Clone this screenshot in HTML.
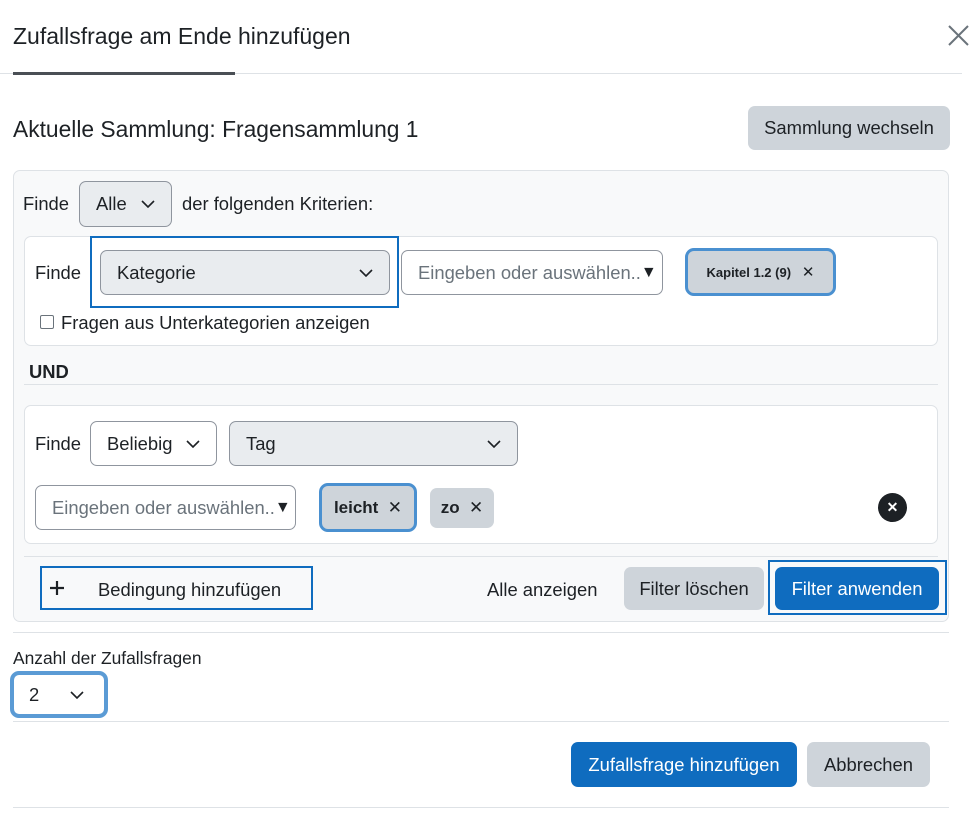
<!DOCTYPE html>
<html><head><meta charset="utf-8"><style>
*{box-sizing:border-box;margin:0;padding:0}
body{width:969px;height:835px;background:#fff;font-family:"Liberation Sans",sans-serif;color:#1d2125;position:relative;overflow:hidden;font-size:18.4px}
.a{position:absolute}
.t{position:absolute;white-space:nowrap;line-height:1}
.sel{position:absolute;border:1px solid #8f959e;border-radius:7px;display:flex;align-items:center;padding-left:16px}
.sel svg{position:absolute;right:16px;top:50%;margin-top:-4px}
.btn{position:absolute;border-radius:7px;display:flex;align-items:center;justify-content:center;white-space:nowrap}
.line{position:absolute;height:1px;background:#dee2e6}
</style></head><body>
<div class="t" style="left:13px;top:25px;font-size:23px">Zufallsfrage am Ende hinzufügen</div>
<svg class="a" style="left:948px;top:25px" width="21" height="21" viewBox="0 0 21 21"><path d="M1 1L20 20M20 1L1 20" stroke="#6a737b" stroke-width="2"/></svg>
<div class="line" style="left:0;top:73px;width:962px"></div>
<div class="a" style="left:13px;top:72px;width:222px;height:3px;background:#4a4f55"></div>
<div class="t" style="left:13px;top:118px;font-size:22.8px">Aktuelle Sammlung: Fragensammlung 1</div>
<div class="btn" style="left:748px;top:106px;width:202px;height:44px;background:#ced4da">Sammlung wechseln</div>

<div class="a" style="left:13px;top:170px;width:936px;height:452px;background:#f8f9fa;border:1px solid #dee2e6;border-radius:7px"></div>
<div class="t" style="left:23px;top:195px">Finde</div>
<div class="sel" style="left:79px;top:181px;width:93px;height:46px;background:#e9ecef">Alle<svg width="14" height="8"><path d="M1 1L7 7L13 1" fill="none" stroke="#1d2125" stroke-width="1.6"/></svg></div>
<div class="t" style="left:182px;top:195px">der folgenden Kriterien:</div>

<div class="a" style="left:24px;top:236px;width:914px;height:110px;background:#fff;border:1px solid #dee2e6;border-radius:7px"></div>
<div class="t" style="left:35px;top:264px">Finde</div>
<div class="a" style="left:90px;top:236px;width:309px;height:72px;border:2px solid #0f6cbf"></div>
<div class="sel" style="left:100px;top:250px;width:290px;height:45px;background:#e9ecef">Kategorie<svg width="14" height="8"><path d="M1 1L7 7L13 1" fill="none" stroke="#1d2125" stroke-width="1.6"/></svg></div>
<div class="sel" style="left:401px;top:250px;width:262px;height:45px;background:#fff;color:#6a737b">Eingeben oder auswählen..<span style="color:#1d2125;font-size:16px">▼</span></div>
<div class="btn" style="left:685px;top:248px;width:151px;height:48px;background:#ced4da;border:3px solid #4a90d0;border-radius:9px;font-size:13px;font-weight:bold">Kapitel 1.2 (9)&nbsp;&nbsp;&nbsp;<span style="font-weight:normal;font-size:15px">✕</span></div>
<div class="a" style="left:40px;top:315px;width:14px;height:14px;border:1px solid #6a737b;border-radius:2px;background:#fff"></div>
<div class="t" style="left:61px;top:314px">Fragen aus Unterkategorien anzeigen</div>

<div class="t" style="left:29px;top:363px;font-weight:bold">UND</div>
<div class="line" style="left:24px;top:384px;width:914px"></div>

<div class="a" style="left:24px;top:405px;width:914px;height:139px;background:#fff;border:1px solid #dee2e6;border-radius:7px"></div>
<div class="t" style="left:35px;top:435px">Finde</div>
<div class="sel" style="left:90px;top:421px;width:127px;height:45px;background:#fff">Beliebig<svg width="14" height="8"><path d="M1 1L7 7L13 1" fill="none" stroke="#1d2125" stroke-width="1.6"/></svg></div>
<div class="sel" style="left:229px;top:421px;width:289px;height:45px;background:#e9ecef">Tag<svg width="14" height="8"><path d="M1 1L7 7L13 1" fill="none" stroke="#1d2125" stroke-width="1.6"/></svg></div>
<div class="sel" style="left:35px;top:485px;width:261px;height:45px;background:#fff;color:#6a737b">Eingeben oder auswählen..<span style="color:#1d2125;font-size:16px">▼</span></div>
<div class="btn" style="left:319px;top:483px;width:98px;height:49px;background:#ced4da;border:3px solid #4a90d0;border-radius:9px;font-weight:bold;font-size:17px">leicht&nbsp;&nbsp;<span style="font-weight:normal">✕</span></div>
<div class="btn" style="left:430px;top:488px;width:64px;height:40px;background:#ced4da;border-radius:7px;font-weight:bold;font-size:17px">zo&nbsp;&nbsp;<span style="font-weight:normal">✕</span></div>
<div class="btn" style="left:878px;top:493px;width:29px;height:29px;border-radius:50%;background:#1d2125;color:#fff;font-size:14px;font-weight:bold">✕</div>

<div class="line" style="left:24px;top:556px;width:914px"></div>
<div class="a" style="left:40px;top:566px;width:273px;height:44px;border:2px solid #0f6cbf"></div>
<svg class="a" style="left:49px;top:580px" width="16" height="16"><path d="M8 1V15M1 8H15" stroke="#1d2125" stroke-width="2.2"/></svg>
<div class="t" style="left:98px;top:581px">Bedingung hinzufügen</div>
<div class="t" style="left:487px;top:581px">Alle anzeigen</div>
<div class="btn" style="left:624px;top:567px;width:140px;height:43px;background:#ced4da">Filter löschen</div>
<div class="a" style="left:768px;top:560px;width:179px;height:55px;border:2px solid #0f6cbf"></div>
<div class="btn" style="left:775px;top:567px;width:164px;height:43px;background:#0f6cbf;color:#fff">Filter anwenden</div>

<div class="line" style="left:13px;top:632px;width:936px"></div>
<div class="t" style="left:13px;top:650px;font-size:17.4px">Anzahl der Zufallsfragen</div>
<div class="sel" style="left:10px;top:671px;width:98px;height:47px;background:#fff;border:4px solid #5b9bd5;border-radius:9px;padding-left:15px">2<svg width="14" height="8" style="right:20px"><path d="M1 1L7 7L13 1" fill="none" stroke="#1d2125" stroke-width="1.6"/></svg></div>
<div class="line" style="left:13px;top:721px;width:936px"></div>
<div class="btn" style="left:571px;top:742px;width:226px;height:45px;background:#0f6cbf;color:#fff">Zufallsfrage hinzufügen</div>
<div class="btn" style="left:807px;top:742px;width:123px;height:45px;background:#ced4da">Abbrechen</div>
<div class="line" style="left:13px;top:807px;width:936px"></div>
</body></html>
